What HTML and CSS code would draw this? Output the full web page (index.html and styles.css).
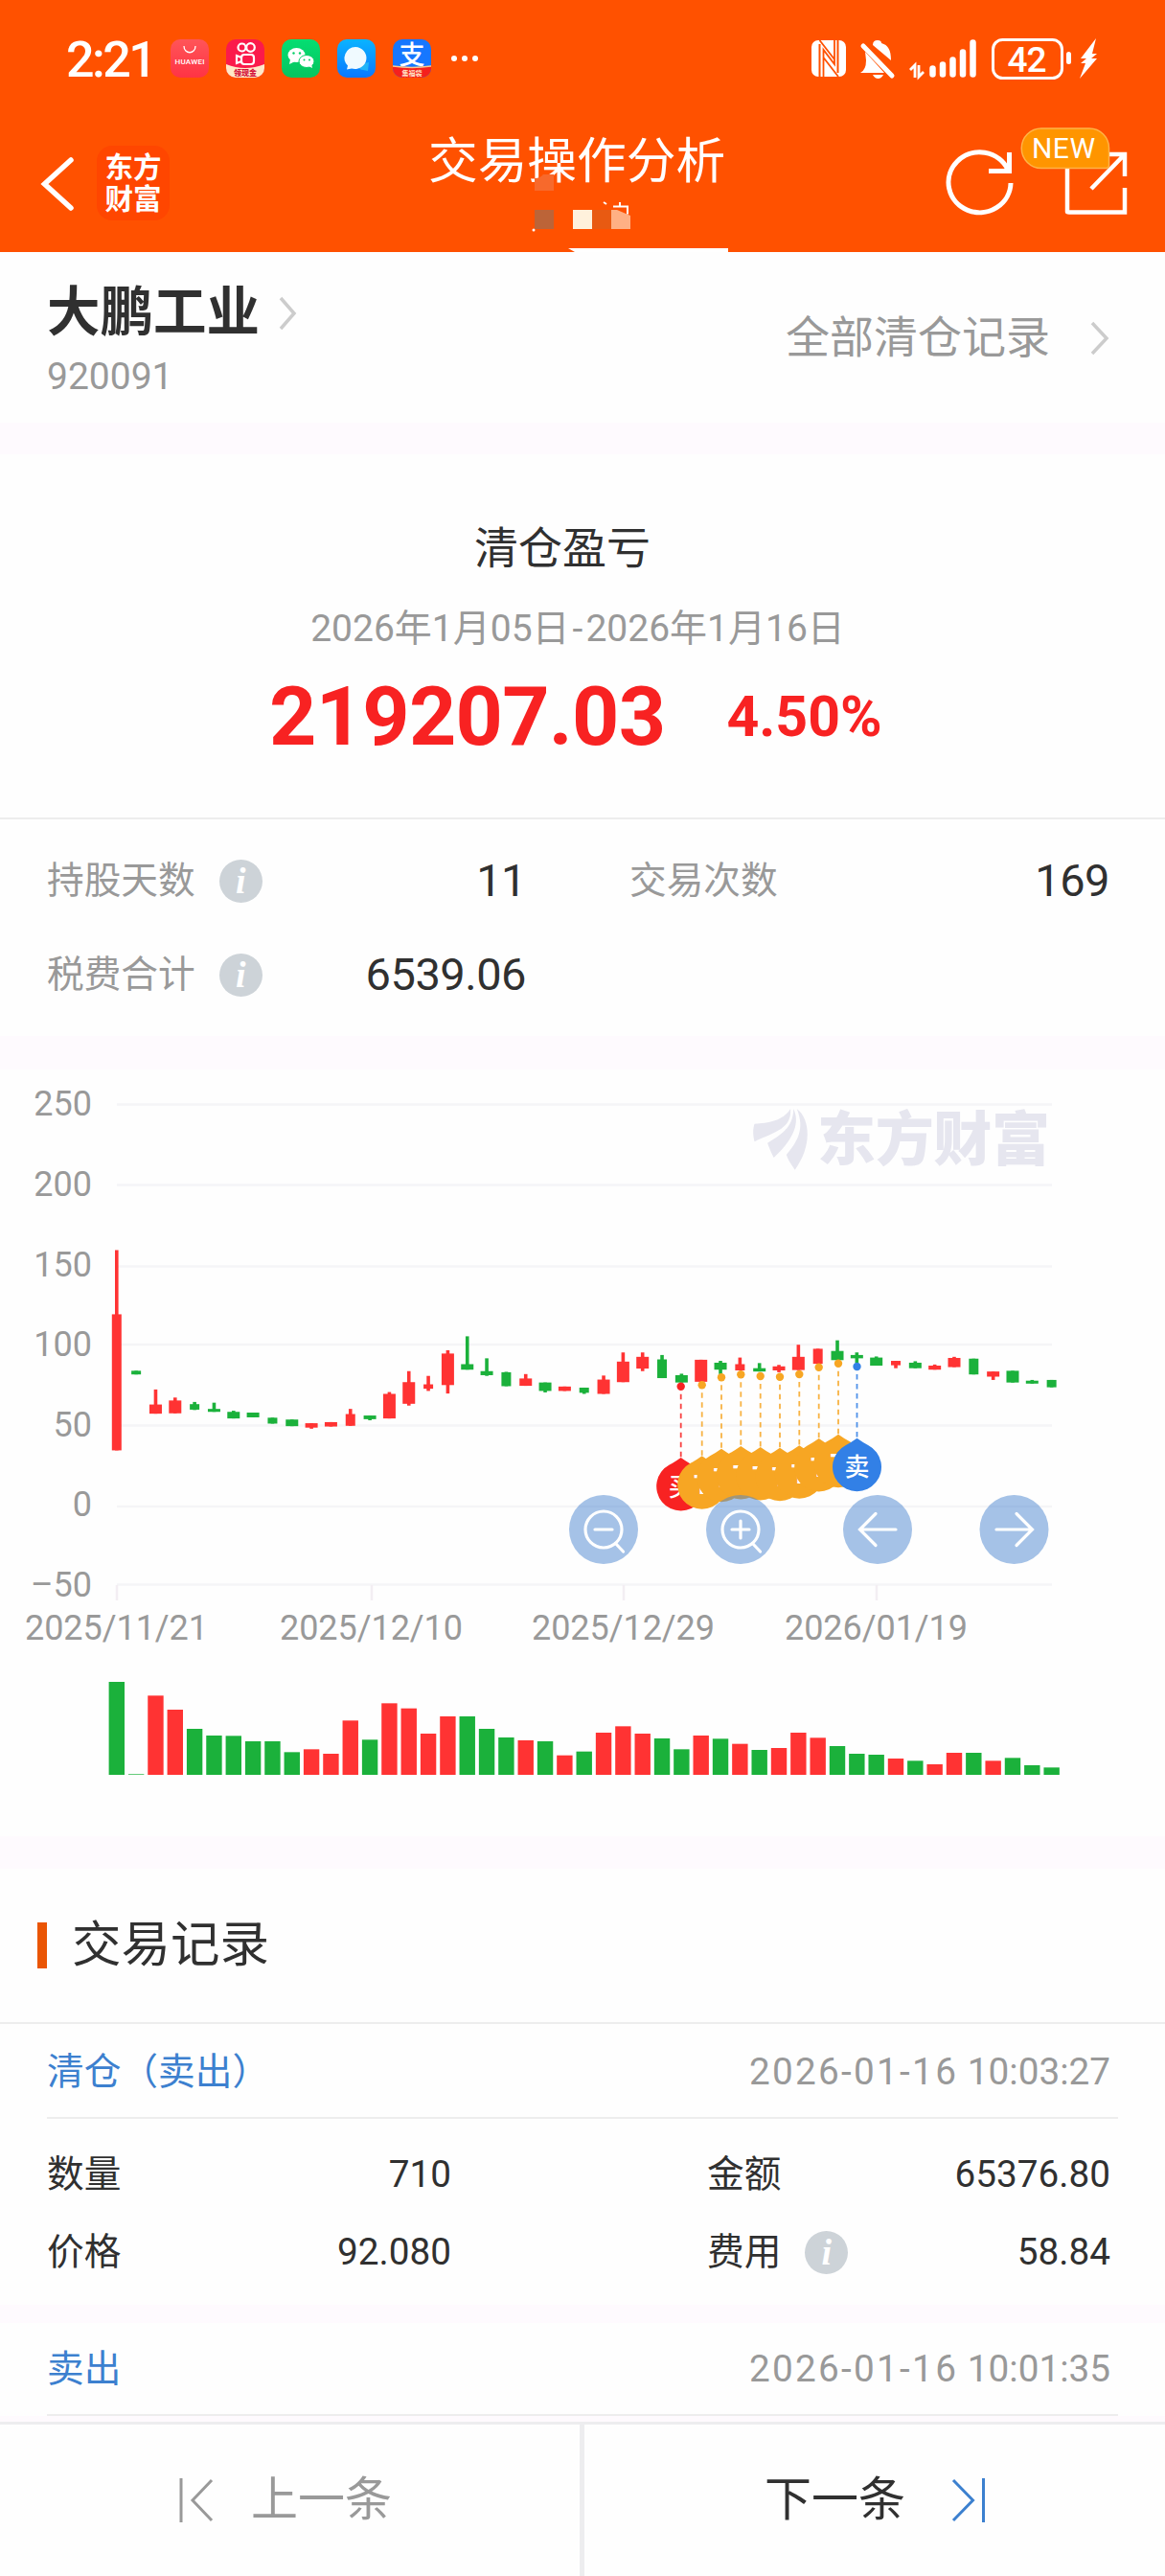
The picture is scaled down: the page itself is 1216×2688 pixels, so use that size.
FILE: index.html
```html
<!DOCTYPE html>
<html lang="zh-CN">
<head>
<meta charset="utf-8">
<title>交易操作分析</title>
<link rel="stylesheet" href="styles.css">
</head>
<body>
<div class="screen">
  <header class="header">
    <div class="statusbar">
      <span class="clock">2:21</span>
      <svg class="apps" width="330" height="40" viewBox="178 41 330 40">
        <defs>
          <linearGradient id="hw" x2="0" y2="1"><stop stop-color="#ff5558"/><stop offset="1" stop-color="#ff3344"/></linearGradient>
          <linearGradient id="wx" x2="0" y2="1"><stop stop-color="#04de72"/><stop offset="1" stop-color="#06c45e"/></linearGradient>
          <linearGradient id="ms" x2="0" y2="1"><stop stop-color="#0ab4ff"/><stop offset="1" stop-color="#0a78ff"/></linearGradient>
          <clipPath id="c1"><rect x="236" y="41" width="40" height="40" rx="10"/></clipPath>
          <clipPath id="c2"><rect x="410" y="41" width="40" height="40" rx="10"/></clipPath>
        </defs>
        <rect x="178" y="41" width="40" height="40" rx="10" fill="url(#hw)"/>
        <path d="M192 48c0 9 12 9 12 0" fill="none" stroke="#fff" stroke-width="1.3"/>
        <text x="198" y="67" font-size="8" font-weight="500" textLength="31" text-anchor="middle" fill="#fff">HUAWEI</text>
        <g clip-path="url(#c1)">
          <rect x="236" y="41" width="40" height="40" fill="#fb1a4b"/>
          <path d="M236 67q20 8 40 0v14h-40z" fill="#ffe9c8"/>
          <g fill="none" stroke="#fff" stroke-width="2.2"><circle cx="252.5" cy="49.500" r="4"/><circle cx="261.500" cy="49.500" r="4.300"/><rect x="252" y="57" width="13" height="10" rx="3"/><path d="M252 60l-5-2v8l5-2"/></g>
          <text x="256" y="79" font-size="8" font-weight="900" text-anchor="middle" fill="#d3123c">领现金</text>
        </g>
        <rect x="294" y="41" width="40" height="40" rx="10" fill="url(#wx)"/>
        <ellipse cx="309.500" cy="57.500" rx="9" ry="7.500" fill="#fff"/><path d="M303 62l-1 5 6-3z" fill="#fff"/>
        <ellipse cx="320" cy="64" rx="8" ry="6.500" fill="#fff" stroke="#06cf66"/><path d="M322 69l4 2-1-4z" fill="#fff"/>
        <g fill="#06cf66"><circle cx="306.500" cy="55.500" r="1.200"/><circle cx="313" cy="55.500" r="1.200"/><circle cx="317.500" cy="62.500" r="1"/><circle cx="323" cy="62.500" r="1"/></g>
        <rect x="352" y="41" width="40" height="40" rx="10" fill="url(#ms)"/>
        <path d="M376 67l9-2-1 9-5-1c-3 0-5-2-5-4z" fill="#20b4f8"/>
        <path d="M371 49a12 11.500 0 1 1-4 22.500l-5 1 1-4a12 11.500 0 0 1 8-19.500z" fill="#f0faff"/>
        <g clip-path="url(#c2)">
          <rect x="410" y="41" width="40" height="40" fill="#1677ff"/>
          <text x="430" y="67" font-size="27" font-weight="500" text-anchor="middle" fill="#fff">支</text>
          <path d="M410 69q20 3 40 0v12h-40z" fill="#f5201d"/><path d="M410 69q20 3 40 0" stroke="#ffc68a" stroke-width="1.500" fill="none"/>
          <text x="430" y="79" font-size="7" font-weight="700" text-anchor="middle" fill="#ffe2c4">集福袋</text>
        </g>
        <g fill="#fff"><circle cx="474" cy="61" r="3"/><circle cx="485" cy="61" r="3"/><circle cx="496" cy="61" r="3"/></g>
      </svg>
      <svg class="system" width="302" height="46" viewBox="845 38 302 46">
        <rect x="847" y="42" width="36" height="38" rx="7" fill="#fff"/>
        <path d="M855.500 46v34M874.500 42v34" stroke="#ff5100" stroke-width="2"/>
        <path d="M859.500 80V52L871 67V42M855.500 42L871 62M859.500 60L875 80" stroke="#ff5100" stroke-width="1.800" fill="none"/>
        <path d="M898 76q6-3 6-13l-1-9 20 22zM911 47q0-5 5-5 4 0 4 3c7 2 10 7 10 18zM911 78h11q-2 4-5.500 4T911 78z" fill="#fff"/>
        <path d="M901 48l30 31" stroke="#fff" stroke-width="5" stroke-linecap="round"/>
        <path d="M950 73l5-5v13M959 68v12l5-5" fill="none" stroke="#fff" stroke-width="2.800"/>
        <g stroke="#fff" stroke-width="6.500" stroke-linecap="round"><path d="M973.500 71.500V77.500M984 67.500V77.500M994.500 62.500V77.500M1005 54.500V77.500M1015.500 44.500V77.500"/></g>
        <rect x="1036.500" y="41.500" width="72" height="40" rx="10" fill="none" stroke="#fff" stroke-width="3"/>
        <rect x="1113" y="54" width="5" height="13" rx="2.500" fill="#fff"/>
        <text x="1072" y="75" font-size="37" font-weight="500" text-anchor="middle" textLength="41" fill="#fff">42</text>
        <path d="M1144 40l-16 21h6l-6 5 5 0-6 16 18-21h-6l6-5h-5z" fill="#fff"/>
      </svg>
    </div>
    <div class="navbar">
      <svg class="back" width="36" height="60" viewBox="42 162 36 60"><path d="M74 167L46.500 192L74 217" fill="none" stroke="#fff" stroke-width="5.500" stroke-linecap="round"/></svg>
      <div class="brand">东方<br>财富</div>
      <h1 class="title">交易操作分析</h1>
      <svg class="actions" width="196" height="96" viewBox="986 131 196 96">
        <g fill="none" stroke="#fff" stroke-width="5">
          <path d="M1055 191A32.500 31.500 0 1 1 1052 177"/><path d="M1053.500 159V178.500H1032"/>
          <path d="M1114 168V221Q1114 221.500 1116 221.500H1174V196M1174 184V161H1154M1139 197L1173 162" stroke-width="4.500"/>
        </g>
        <path d="M1087 134h50a20.500 20.500 0 0 1 20.500 20.500v18q0 3-3 3H1087a20.500 20.500 0 0 1 0-41.500z" fill="#ff9500" stroke="#ffb347" stroke-width="1.500"/>
        <text x="1110" y="165" font-size="30" font-weight="400" text-anchor="middle" textLength="66" fill="#fff">NEW</text>
      </svg>
    </div>
    <svg class="censor" width="220" height="83" viewBox="548 180 220 83">
      <path d="M558 186q6 0 9-4h11v17h-20z" fill="#f7692c"/>
      <rect x="558" y="219" width="20" height="20" fill="#bc6438"/>
      <rect x="598" y="219" width="20" height="20" fill="#fff1dc"/>
      <rect x="618" y="219" width="20" height="20" fill="#e85a12"/>
      <path d="M638 219h6l14 6v14h-20z" fill="#ffb084"/>
      <path d="M640 215.500h15v8M647 211v4M630 211l3 2" fill="none" stroke="#fff" stroke-width="2"/>
      <circle cx="557" cy="240" r="1.500" fill="#fff"/>
      <path d="M593 259H760V263H600Z" fill="#fff"/>
    </svg>
  </header>

  <section class="stock">
    <div class="stock-id">
      <div class="stock-name">大鹏工业<svg width="20" height="36" viewBox="0 0 20 36"><path d="M2 2l14 16L2 34" fill="none" stroke="#ccc" stroke-width="3.500"/></svg></div>
      <div class="stock-code">920091</div>
    </div>
    <div class="all-records">全部清仓记录<svg width="20" height="36" viewBox="0 0 20 36"><path d="M2 2l15 16L2 34" fill="none" stroke="#ccc" stroke-width="3.500"/></svg></div>
  </section>

  <section class="profit">
    <div class="profit-title">清仓盈亏</div>
    <div class="profit-range">2026年1月05日<span class="dash">-</span>2026年1月16日</div>
    <div class="profit-values"><span class="amount">219207.03</span><span class="percent">4.50%</span></div>
  </section>

  <section class="stats">
    <div class="stat"><span>持股天数</span><i class="info">i</i><b>11</b></div>
    <div class="stat"><span>交易次数</span><b>169</b></div>
    <div class="stat"><span>税费合计</span><i class="info">i</i><b>6539.06</b></div>
  </section>

  <section class="chart">
    <svg id="chart" width="1216" height="800" viewBox="0 1116 1216 800">
      <g id="grid"></g>
      <g fill="#e6e6ef">
        <g transform="translate(608 1120) scale(.3877 .3827)">
          <path d="M463 138C500 136 540 130 560 97C564 150 520 160 463 186C458 165 459 150 463 138Z"/>
          <path d="M568 97C584 130 575 175 515 230C505 210 502 200 498 190C530 170 568 150 568 97Z"/>
          <path d="M577 97C614 125 618 200 572 263C560 245 553 235 549 222C590 175 594 140 577 97Z"/>
        </g>
        <text x="853" y="1210.500" font-size="61" font-weight="900" textLength="243">东方财富</text>
      </g>
      <g id="candles"></g>
      <g id="pins"></g>
      <g id="volumes"></g>
      <g fill="#4b86d0" fill-opacity=".5"><circle cx="630" cy="1596" r="36"/><circle cx="773" cy="1596" r="36"/><circle cx="916" cy="1596" r="36"/><circle cx="1058.500" cy="1596" r="36"/></g>
      <g fill="none" stroke="#fff" stroke-width="3.200" stroke-linecap="round">
        <circle cx="630" cy="1596" r="19"/><path d="M621 1596h18M642.500 1610.500l8 8.500"/>
        <circle cx="773" cy="1596" r="19"/><path d="M764 1596h18M773 1587v18M785.500 1610.500l8 8.500"/>
        <path d="M935 1596H898M914 1579.500L897.500 1596L914 1612.500"/>
        <path d="M1040 1596H1077M1061 1579.500L1077.500 1596L1061 1612.500"/>
      </g>
    </svg>
  </section>

  <section class="records">
    <h2 class="records-title">交易记录</h2>
    <article class="record first">
      <div class="record-head"><span class="kind">清仓（卖出）</span><span class="time"><span class="day">2026-01-16</span> 10:03:27</span></div>
      <div class="record-body">
        <div class="cell"><span>数量</span><b>710</b></div>
        <div class="cell"><span>金额</span><b>65376.80</b></div>
        <div class="cell"><span>价格</span><b>92.080</b></div>
        <div class="cell"><span>费用</span><i class="info">i</i><b>58.84</b></div>
      </div>
    </article>
    <article class="record">
      <div class="record-head"><span class="kind">卖出</span><span class="time"><span class="day">2026-01-16</span> 10:01:35</span></div>
    </article>
  </section>

  <footer class="pager">
    <div class="prev"><svg width="36" height="46" viewBox="187 2586 36 46"><path d="M189 2586V2632M221 2588L201 2609L221 2630" fill="none" stroke="#999" stroke-width="3"/></svg><span>上一条</span></div>
    <div class="next"><span>下一条</span><svg width="36" height="46" viewBox="994 2586 36 46"><path d="M1027.500 2586V2632M996 2588L1016.500 2609L996 2630" fill="none" stroke="#3c80cf" stroke-width="3"/></svg></div>
  </footer>
</div>
<script src="chart.js"></script>
</body>
</html>
```

FILE: styles.css
```css
* { box-sizing: border-box; }
body {
  margin: 0;
  background: #fefefe;
  color: #303030;
  font-family: Roboto, "Noto Sans CJK SC", sans-serif;
  line-height: 1.2;
}
h1, h2 { margin: 0; font-weight: 400; }
svg { display: block; flex: none; }
svg text { font-family: Roboto, "Noto Sans CJK SC", sans-serif; }
b { font-weight: 400; }

.screen { width: 1216px; height: 2688px; display: flex; flex-direction: column; overflow: hidden; }

.header { position: relative; height: 263px; flex: none; background: #ff5100; color: #fff; }
.statusbar { display: flex; align-items: center; height: 84px; padding: 38px 69px 0 69px; }
.clock { width: 109px; padding-top: 3px; font-size: 52px; line-height: 46px; font-weight: 500; letter-spacing: -2.500px; white-space: nowrap; }
.system { margin-left: auto; }
.navbar { display: flex; padding: 47px 34px 0 42px; height: 179px; align-items: flex-start; }
.back { margin-top: 31px; }
.brand {
  width: 76px; height: 78px; margin: 21px 0 0 23px; padding-top: 7px; border-radius: 16px;
  background: #ff4600; text-align: center; font-size: 29.500px; line-height: 33px; font-weight: 700;
}
.title { margin: 12px 0 0 270px; font-size: 51.700px; line-height: 52px; white-space: nowrap; }
.actions { margin-left: auto; }
.censor { position: absolute; left: 548px; top: 180px; }

.stock { height: 211px; flex: none; display: flex; justify-content: space-between; padding: 32px 58px 0 49px; border-bottom: 33px solid #fefafe; }
.stock-name { display: flex; align-items: center; gap: 20px; font-size: 55.500px; line-height: 64px; font-weight: 700; }
.stock-code { margin-top: 9px; font-size: 39px; line-height: 50px; color: #999; }
.all-records { display: flex; align-items: center; gap: 42px; height: 60px; margin-top: 28px; font-size: 46px; color: #999; }

.profit { height: 381px; flex: none; padding-top: 68px; text-align: center; border-bottom: 2px solid #ededed; }
.profit-title { padding-right: 42px; font-size: 46px; line-height: 60px; }
.profit-range { margin-top: 28px; padding-right: 10px; font-size: 39px; line-height: 52px; color: #999; }
.dash { padding: 0 3px; }
.profit-values { display: flex; align-items: center; gap: 64px; margin-top: 21px; padding-left: 281px; height: 90px; font-weight: 700; color: #f82222; }
.amount { font-size: 86px; line-height: 90px; letter-spacing: -.7px; }
.percent { font-size: 59px; line-height: 90px; }

.stats { height: 261px; flex: none; display: grid; grid-template-columns: 500px 501px; grid-auto-rows: 98px; column-gap: 108px; padding: 15px 0 0 49px; border-bottom: 35px solid #fefafe; }
.stat { display: flex; align-items: center; font-size: 38.700px; color: #999; }
.stat b { margin-left: auto; font-size: 47px; color: #303030; letter-spacing: -.5px; }
.info {
  width: 45px; height: 45px; margin-left: 25px; border-radius: 50%; background: #cdd3d8; color: #fff;
  font: italic 700 38px/44px "Liberation Serif", serif; text-align: center;
}

.chart { height: 834px; flex: none; border-bottom: 34px solid #fefafe; }
.axis { font-size: 36px; fill: #999; }

.records { flex: 1; min-height: 0; overflow: hidden; }
.records-title { display: flex; align-items: center; gap: 26px; height: 162px; padding-left: 39px; border-bottom: 2px solid #ededed; font-size: 51.500px; }
.records-title::before { content: ""; width: 10px; height: 48px; background: #ea5504; }
.record { border-bottom: 19px solid #fefafe; font-size: 38.700px; }
.first { padding-top: 2px; }
.record-head { display: flex; align-items: center; justify-content: space-between; height: 97px; margin: 0 49px; padding-right: 8px; border-bottom: 2px solid #ededed; padding-top: 2px; }
.kind { color: #3c80cf; }
.time { color: #999; }
.day { letter-spacing: 2.300px; }
.record-body { display: grid; grid-template-columns: 422px 421px; column-gap: 267px; grid-auto-rows: 81px; height: 194px; padding: 18px 0 0 49px; }
.cell { display: flex; align-items: center; }
.cell b { margin-left: auto; }

.pager { height: 161px; flex: none; display: flex; border-top: 3px solid #ededef; background: #fefefe; font-size: 49px; color: #303030; }
.pager > div { display: flex; align-items: center; gap: 39px; }
.prev { width: 610px; padding-left: 187px; border-right: 5px solid #ededef; color: #999; }
.pager .next { padding-left: 188px; gap: 48px; }
```

FILE: chart.js
```js
const RED = '#ff3333', GREEN = '#1bb13b';
const X0 = 121.8, STEP = 20.33;
const unitY = v => 1120 + v / 2.613;

// grid and axes
const levels = [[250, 1152.5], [200, 1236.5], [150, 1321.5], [100, 1403], [50, 1487.5], [0, 1572], [-50, 1653.5]];
const labelY = [1164, 1248, 1331.5, 1415, 1499, 1582, 1666];
let grid = '';
levels.forEach(([n, y], i) => {
  grid += `<path d="M122 ${y}H1098" stroke="#f5f5f7" stroke-width="2.5"/>`;
  grid += `<text class="axis" x="96" y="${labelY[i]}" text-anchor="end">${String(n).replace('-', '–')}</text>`;
});
[['2025/11/21', 122], ['2025/12/10', 388], ['2025/12/29', 651], ['2026/01/19', 915]].forEach(([t, x]) => {
  grid += `<path d="M${x} 1654V1670" stroke="#f3eef3" stroke-width="2.5"/>`;
  grid += `<text class="axis" x="${x - .5}" y="1710.5" text-anchor="middle" textLength="191">${t}</text>`;
});
document.getElementById('grid').innerHTML = grid;

// high, body top, body bottom, low
const candles = [
  ['R', 482, 657, 1028, 1028], ['G', 811, 811, 821, 821], ['R', 862, 903, 928, 928], ['R', 884, 892, 927, 927],
  ['G', 896, 902, 917, 918], ['G', 898, 915, 923, 923], ['G', 920, 923, 941, 941], ['G', 925, 925, 938, 938],
  ['G', 939, 939, 955, 955], ['G', 944, 944, 962, 962], ['R', 954, 954, 966, 969], ['R', 951, 951, 963, 963],
  ['R', 915, 929, 961, 961], ['G', 933, 933, 943, 946], ['R', 869, 874, 941, 941], ['R', 812, 842, 901, 906],
  ['R', 825, 848, 860, 866], ['R', 755, 764, 850, 873], ['G', 717, 793, 808, 808], ['G', 777, 812, 823, 825],
  ['G', 814, 815, 853, 853], ['R', 820, 832, 852, 852], ['G', 843, 843, 866, 870], ['R', 854, 854, 866, 866],
  ['G', 857, 857, 871, 874], ['R', 824, 835, 874, 874], ['R', 761, 786, 842, 842], ['R', 761, 773, 805, 812],
  ['G', 768, 780, 831, 831], ['G', 819, 823, 843, 843], ['R', 781, 781, 841, 841], ['G', 784, 789, 808, 820],
  ['R', 775, 793, 810, 810], ['G', 790, 804, 813, 813], ['R', 795, 799, 810, 815], ['R', 740, 773, 809, 809],
  ['R', 751, 751, 792, 792], ['G', 728, 757, 782, 782], ['G', 761, 768, 777, 790], ['G', 772, 775, 797, 797],
  ['R', 784, 784, 796, 804], ['G', 785, 789, 804, 804], ['R', 794, 797, 808, 808], ['R', 773, 776, 801, 801],
  ['G', 778, 778, 821, 821], ['R', 813, 813, 827, 836], ['G', 811, 811, 843, 843], ['G', 836, 838, 846, 846],
  ['G', 836, 836, 856, 856]
];
document.getElementById('candles').innerHTML = candles.map(([c, hi, top, bot, lo], i) => {
  const x = X0 + i * STEP, w = i % 4 === 0 || i === 1 ? 10 : 13, f = c === 'R' ? RED : GREEN;
  return `<rect x="${x - 1.8}" y="${unitY(hi)}" width="3.6" height="${(lo - hi) / 2.613}" fill="${f}"/>` +
    `<rect x="${x - w / 2}" y="${unitY(top)}" width="${w}" height="${(bot - top) / 2.613}" fill="${f}"/>`;
}).join('');

// traded volume
const tops = [225, 514, 268, 312, 372, 393, 394, 411, 411, 445, 436, 450, 346, 406, 292, 308, 387, 333, 333, 372, 399, 408, 411, 455, 443,
  384, 364, 387, 402, 436, 393, 403, 419, 438, 432, 384, 400, 426, 450, 453, 465, 472, 483, 447, 447, 472, 463, 486, 493];
document.getElementById('volumes').innerHTML = tops.map((v, i) => {
  const h = (516 - v) / 3, f = i > 0 && candles[i][0] === 'R' ? RED : GREEN;
  return `<rect x="${X0 + i * STEP - 8.2}" y="${1852 - h}" width="16.4" height="${h}" fill="${f}"/>`;
}).join('');

// trade markers: x, dot y, tip y
const pins = [
  [710.7, 1446.7, 1521, '#f82222', '买'],
  [732.7, 1445.3, 1519.3, '#f7a623', 'T'], [753, 1437.3, 1511.7, '#f7a623', 'T'], [773.3, 1434.3, 1509, '#f7a623', 'T'],
  [793.7, 1436, 1510, '#f7a623', 'T'], [814, 1436.7, 1510.7, '#f7a623', 'T'], [834.3, 1434, 1508.3, '#f7a623', 'T'],
  [854.7, 1426.7, 1501, '#f7a623', 'T'], [875, 1422.7, 1496.7, '#f7a623', 'T'],
  [894.5, 1426, 1500.7, '#3280e6', '卖']
];
document.getElementById('pins').innerHTML = pins.map(([x, d, t, f, s]) =>
  `<circle cx="${x}" cy="${d}" r="4.2" fill="${f}"/>` +
  `<path d="M${x} ${d + 8}V${t}" stroke="${f}" stroke-width="1.8" stroke-dasharray="5.5 4.5" opacity=".85"/>` +
  `<path d="M${x} ${t}Q${x + 7} ${t + 5} ${x + 12} ${t + 7.500}A25.500 25.500 0 1 1 ${x - 12} ${t + 7.500}Q${x - 7} ${t + 5} ${x} ${t}Z" fill="${f}"/>` +
  `<text x="${x}" y="${s === 'T' ? t + 40 : t + 39.500}" font-size="${s === 'T' ? 27 : 26}" font-weight="${s === 'T' ? 700 : 500}" text-anchor="middle" fill="#fff">${s}</text>`
).join('');
```
